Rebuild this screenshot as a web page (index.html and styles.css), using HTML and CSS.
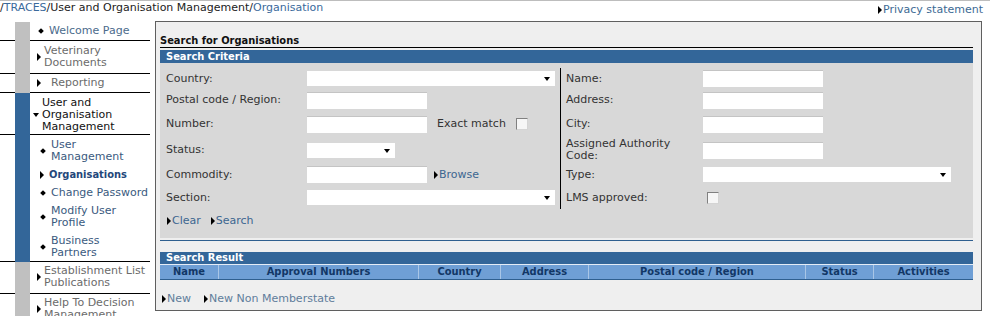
FILE: index.html
```html
<!DOCTYPE html>
<html lang="en">
<head>
    <meta charset="UTF-8">
    <title>Search for Organisations</title>
    <link rel="stylesheet" href="styles.css">
</head>
<body>
    <div class="topbar">
        <div class="breadcrumb">/<a href="#">TRACES</a>/User and Organisation Management/<a href="#">Organisation</a></div>
        <a class="arrow-link privacy" href="#">Privacy statement</a>
    </div>

    <div class="page">
        <div class="nav">
            <div class="nav-item">
                <span class="nav-gap"></span><span class="nav-bar"></span>
                <div class="nav-text pad-3"><span class="dot"></span><a class="nav-link" href="#">Welcome Page</a></div>
            </div>
            <div class="nav-item">
                <span class="nav-gap"></span><span class="nav-bar"></span>
                <div class="nav-text pad-4"><span class="tri"></span><a class="nav-off" href="#">Veterinary<br>Documents</a></div>
            </div>
            <div class="nav-item">
                <span class="nav-gap"></span><span class="nav-bar"></span>
                <div class="nav-text pad-3"><span class="tri wide"></span><a class="nav-off" href="#">Reporting</a></div>
            </div>
            <div class="nav-item active">
                <span class="nav-gap"></span><span class="nav-bar"></span>
                <div class="nav-text open"><span class="tri-down"></span><span class="nav-current">User and<br>Organisation<br>Management</span></div>
            </div>
            <div class="nav-item active">
                <span class="nav-gap"></span><span class="nav-bar"></span>
                <ul class="subnav">
                    <li><span class="dot"></span><a href="#">User<br>Management</a></li>
                    <li class="selected"><span class="tri"></span><a href="#">Organisations</a></li>
                    <li><span class="dot"></span><a href="#">Change Password</a></li>
                    <li><span class="dot"></span><a href="#">Modify User<br>Profile</a></li>
                    <li><span class="dot"></span><a href="#">Business<br>Partners</a></li>
                </ul>
            </div>
            <div class="nav-item">
                <span class="nav-gap"></span><span class="nav-bar"></span>
                <div class="nav-text pad-34"><span class="tri"></span><a class="nav-off" href="#">Establishment List<br>Publications</a></div>
            </div>
            <div class="nav-item">
                <span class="nav-gap"></span><span class="nav-bar"></span>
                <div class="nav-text pad-3"><span class="tri"></span><a class="nav-off" href="#">Help To Decision<br>Management</a></div>
            </div>
        </div>

        <div class="panel">
            <h1 class="panel-title">Search for Organisations</h1>
            <div class="section-head">Search Criteria</div>
            <div class="criteria">
                <div class="form-grid">
                    <div class="cell">Country:</div>
                    <div class="cell"><div class="select wide"></div></div>
                    <div class="cell lbl-r">Name:</div>
                    <div class="cell"><div class="input"></div></div>

                    <div class="cell">Postal code / Region:</div>
                    <div class="cell"><div class="input"></div></div>
                    <div class="cell lbl-r">Address:</div>
                    <div class="cell"><div class="input"></div></div>

                    <div class="cell">Number:</div>
                    <div class="cell"><div class="input"></div><span class="exact">Exact match</span><span class="check"></span></div>
                    <div class="cell lbl-r">City:</div>
                    <div class="cell"><div class="input"></div></div>

                    <div class="cell">Status:</div>
                    <div class="cell"><div class="select short"></div></div>
                    <div class="cell lbl-r two-line">Assigned Authority<br>Code:</div>
                    <div class="cell"><div class="input"></div></div>

                    <div class="cell">Commodity:</div>
                    <div class="cell"><div class="input"></div><a class="arrow-link browse" href="#">Browse</a></div>
                    <div class="cell lbl-r">Type:</div>
                    <div class="cell"><div class="select wide"></div></div>

                    <div class="cell">Section:</div>
                    <div class="cell"><div class="select wide"></div></div>
                    <div class="cell lbl-r">LMS approved:</div>
                    <div class="cell"><span class="check lms"></span></div>
                </div>
                <div class="actions">
                    <a class="arrow-link" href="#">Clear</a>
                    <a class="arrow-link" href="#">Search</a>
                </div>
            </div>
            <div class="rule"></div>

            <div class="section-head result-head">Search Result</div>
            <div class="result-cols">
                <span>Name</span>
                <span>Approval Numbers</span>
                <span>Country</span>
                <span>Address</span>
                <span>Postal code / Region</span>
                <span>Status</span>
                <span>Activities</span>
            </div>
            <div class="links">
                <a class="arrow-link" href="#">New</a>
                <a class="arrow-link" href="#">New Non Memberstate</a>
            </div>
        </div>
    </div>
</body>
</html>
```

FILE: styles.css
```css
* {
    margin: 0;
    padding: 0;
    box-sizing: border-box;
}

html, body {
    height: 100%;
    overflow: hidden;
}

body {
    background: #fff;
    font-family: "DejaVu Sans", Verdana, sans-serif;
    font-size: 11px;
    color: #222;
}

a {
    text-decoration: none;
    color: #3c6690;
}

/* small black arrow in front of links */
.arrow-link::before {
    content: "";
    display: inline-block;
    border-left: 4px solid #000;
    border-top: 4px solid transparent;
    border-bottom: 4px solid transparent;
    margin-right: 1px;
    vertical-align: -1px;
}

/* Top bar */
.topbar {
    display: flex;
    justify-content: space-between;
    align-items: flex-start;
    height: 17px;
    border-top: 1px solid #bdbdbd;
}

.breadcrumb {
    line-height: 14px;
    color: #222;
}

.breadcrumb a {
    color: #3a6a9c;
}

.privacy {
    margin-top: 2px;
    margin-right: 7px;
    line-height: 14px;
    color: #3d6a94;
}

.page {
    display: flex;
    align-items: flex-start;
}

/* Left navigation */
.nav {
    width: 150px;
    margin-right: 5px;
    padding-top: 5px;
    line-height: 12px;
}

.nav-item {
    display: flex;
}

.nav-gap {
    width: 15px;
    border-bottom: 1px solid #000;
}

.nav-bar {
    width: 15px;
    background: #c0c0c0;
}

.nav-item.active .nav-bar {
    background: #336699;
}

.nav-text {
    flex: 1;
    display: flex;
    align-items: center;
    padding-left: 7px;
    border-bottom: 1px solid #000;
    white-space: nowrap;
}

.pad-3 { padding-top: 3px; padding-bottom: 3px; }
.pad-4 { padding-top: 4px; padding-bottom: 4px; }
.pad-34 { padding-top: 3px; padding-bottom: 4px; }

.nav-text.open {
    padding: 4px 0 1px 3px;
}

.nav-link {
    color: #4b6b8c;
}

.nav-off {
    color: #6b6b6b;
}

.nav-current {
    color: #111;
}

.dot {
    display: inline-block;
    flex: none;
    width: 4px;
    height: 4px;
    margin: 0 6px 0 2px;
    background: #000;
    transform: rotate(45deg);
}

.tri {
    display: inline-block;
    flex: none;
    border-left: 4px solid #000;
    border-top: 4px solid transparent;
    border-bottom: 4px solid transparent;
    margin-right: 3px;
}

.tri.wide {
    margin-right: 10px;
}

.tri-down {
    display: inline-block;
    flex: none;
    border-top: 4px solid #000;
    border-left: 3.5px solid transparent;
    border-right: 3.5px solid transparent;
    margin-right: 3px;
}

.subnav {
    flex: 1;
    list-style: none;
    display: flex;
    flex-direction: column;
    gap: 6px;
    padding: 4px 0 2px 9px;
    border-bottom: 1px solid #000;
    white-space: nowrap;
}

.subnav li {
    display: flex;
    align-items: center;
}

.subnav a {
    color: #3a5a7e;
}

.subnav .tri {
    margin: 0 5px 0 1px;
}

.subnav .selected a {
    font-family: "DejaVu Sans Condensed", "DejaVu Sans", sans-serif;
    font-weight: bold;
    color: #24477a;
}

/* Main panel */
.panel {
    width: 827px;
    height: 290px;
    margin-top: 4px;
    padding: 12px 8px 0 4px;
    border: 1px solid #5f5f5f;
    background: #efefef;
}

.panel-title {
    font-family: "DejaVu Sans Condensed", "DejaVu Sans", sans-serif;
    font-size: 11px;
    font-weight: bold;
    line-height: 13px;
    color: #111;
    border-bottom: 1px solid #000;
}

.section-head {
    margin-top: 2px;
    height: 13px;
    padding-left: 6px;
    line-height: 13px;
    background: #336699;
    color: #fff;
    font-family: "DejaVu Sans Condensed", "DejaVu Sans", sans-serif;
    font-weight: bold;
}

.criteria {
    background: #d8d8d8;
    padding: 5px 0 7px 6px;
    color: #333;
}

.form-grid {
    display: grid;
    grid-template-columns: 141px 253px 143px 1fr;
    grid-template-rows: 21px 22px 26px 26px 23px 23px;
}

.cell {
    display: flex;
    align-items: center;
    line-height: 12px;
}

.lbl-r {
    border-left: 1px solid #000;
    padding-left: 5px;
}

.input {
    width: 120px;
    height: 17px;
    background: #fff;
    border-top: 1px solid #c4c4c4;
}

.select {
    position: relative;
    height: 15px;
    background: #fff;
}

.select.wide {
    width: 248px;
}

.select.short {
    width: 88px;
}

.select::after {
    content: "";
    position: absolute;
    right: 5px;
    top: 6px;
    border-top: 4px solid #000;
    border-left: 3.5px solid transparent;
    border-right: 3.5px solid transparent;
}

.exact {
    margin-left: 10px;
}

.check {
    width: 12px;
    height: 12px;
    margin-left: 10px;
    background: #f6f6f6;
    border: 1px solid;
    border-color: #808080 #d4d4d4 #d4d4d4 #808080;
}

.check.lms {
    margin-left: 4px;
}

.browse {
    margin-left: 7px;
}

.actions {
    display: flex;
    align-items: center;
    gap: 10px;
    height: 22px;
    padding-left: 1px;
}

.rule {
    margin-top: 2px;
    border-top: 1px solid #2f5f8f;
}

.result-head {
    margin-top: 11px;
    height: 12px;
    line-height: 12px;
}

.result-cols {
    display: grid;
    grid-template-columns: 58px 200px 82px 88px 217px 68px 1fr;
    height: 16px;
    border-top: 1px solid #e4ecf6;
    border-bottom: 1px solid #2f5f8f;
    background: #6f9fd5;
    font-family: "DejaVu Sans Condensed", "DejaVu Sans", sans-serif;
    font-weight: bold;
    line-height: 14px;
    color: #123766;
}

.result-cols span {
    text-align: center;
    border-left: 1px solid #a9c6e6;
}

.result-cols span:first-child {
    border-left: 0;
}

.links {
    display: flex;
    gap: 13px;
    margin-top: 13px;
    padding-left: 2px;
    line-height: 12px;
}

.links a {
    color: #5f7d9b;
}
```
